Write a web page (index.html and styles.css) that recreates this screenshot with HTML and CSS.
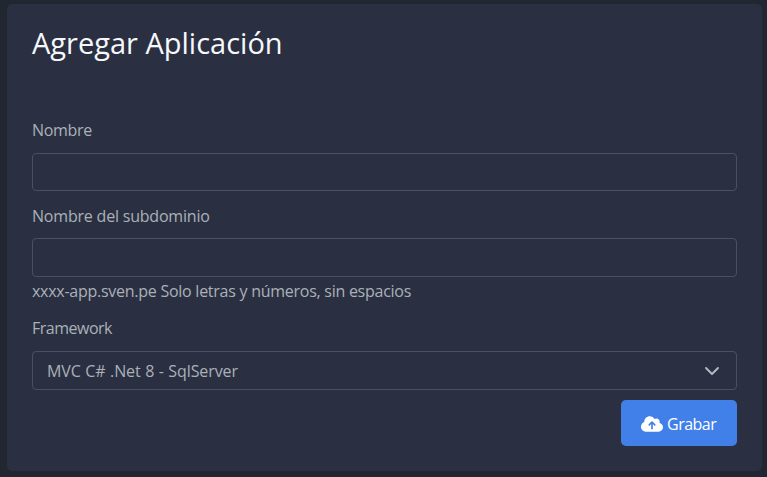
FILE: index.html
```html
<!DOCTYPE html>
<html lang="es">
<head>
<meta charset="utf-8">
<title>Agregar Aplicación</title>
<link rel="stylesheet" href="styles.css">
</head>
<body>
<form class="card">
  <h1 class="title"><span>Agregar Aplicación</span></h1>
  <label class="label label-name" for="name">Nombre</label>
  <input class="field" id="name" type="text">
  <label class="label label-sub" for="sub">Nombre del subdominio</label>
  <input class="field field-sub" id="sub" type="text">
  <div class="hint">xxxx-app.sven.pe Solo letras y números, sin espacios</div>
  <div class="label label-framework">Framework</div>
  <div class="field select">
    <span class="value">MVC C# .Net 8 - SqlServer</span>
    <svg class="chevron" viewBox="0 0 16 16"><path d="m2 5 6 6 6-6"/></svg>
  </div>
  <button class="save" type="button">
    <svg class="cloud" viewBox="0 32 640 448"><path d="M144 480C64.5 480 0 415.5 0 336c0-62.8 40.2-116.2 96.2-135.9c-.1-2.7-.2-5.4-.2-8.1c0-88.4 71.6-160 160-160c59.3 0 111 32.2 138.7 80.2C409.9 102 428.3 96 448 96c53 0 96 43 96 96c0 12.2-2.3 23.8-6.4 34.6C596 238.4 640 290.1 640 352c0 70.7-57.3 128-128 128H144zm79-217c-9.4 9.4-9.4 24.6 0 33.9s24.6 9.4 33.9 0l39-39V392c0 13.3 10.7 24 24 24s24-10.7 24-24V257.9l39 39c9.4 9.4 24.6 9.4 33.9 0s9.4-24.6 0-33.9l-80-80c-9.4-9.4-24.6-9.4-33.9 0l-80 80z"/></svg>
    <span class="save-text">Grabar</span>
  </button>
</form>
</body>
</html>
```
FILE: styles.css
```css
* { box-sizing: border-box; }
body {
  margin: 0;
  height: 477px;
  padding: 4px 5px 6px 7px;
  overflow: hidden;
  background: #212631;
  color: #aab0b9;
  font: 16px/24px "Open Sans", "Noto Sans", sans-serif;
}
.card {
  display: flex;
  flex-direction: column;
  height: 467px;
  padding: 0 25px;
  border-radius: 5px;
  background: #2a3041;
}
.title {
  margin: 21px 0 0;
  color: #f6f8fb;
  font-size: 29px;
  font-weight: 400;
  line-height: 36px;
  letter-spacing: 0;
}
.label, .hint { height: 24px; white-space: nowrap; }
.label-name { margin: 57px 0 11px; letter-spacing: -0.3px; }
.label-sub { margin: 13px 0 10px; letter-spacing: -0.2px; }
.field {
  display: block;
  width: 100%;
  height: 38px;
  margin: 0;
  padding: 0 14px;
  border: 1px solid #4a505d;
  border-radius: 4px;
  background: transparent;
  color: inherit;
  font: inherit;
}
.field-sub { height: 39px; }
.hint { margin-top: 2px; letter-spacing: -0.26px; }
.label-framework { margin: 13px 0 11px; letter-spacing: -0.5px; }
.select {
  display: flex;
  align-items: center;
  justify-content: space-between;
  height: 39px;
  padding-right: 16px;
}
.value { letter-spacing: -0.1px; word-spacing: 0.5px; }
.chevron {
  width: 16px;
  height: 16px;
  fill: none;
  stroke: #b4b9c3;
  stroke-width: 1.9;
  stroke-linecap: round;
  stroke-linejoin: round;
}
.save {
  display: flex;
  align-items: center;
  align-self: flex-end;
  gap: 4px;
  width: 116px;
  height: 46px;
  margin: 10px 0 0;
  padding: 1px 0 0 20px;
  border: 0;
  border-radius: 5px;
  background: #4080e8;
  color: #fff;
  font: inherit;
}
.save-text { letter-spacing: -0.5px; }
.cloud { width: 22px; height: 16px; fill: #fff; }
```
